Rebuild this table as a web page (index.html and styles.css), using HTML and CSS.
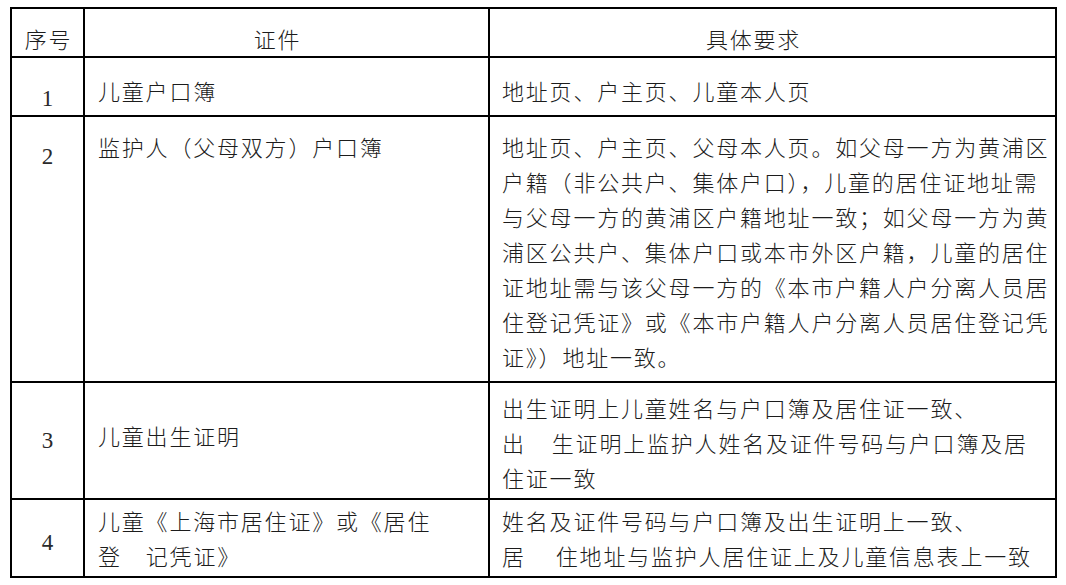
FILE: index.html
```html
<!DOCTYPE html>
<html lang="zh-CN">
<head>
<meta charset="utf-8">
<title>证件要求</title>
<link rel="stylesheet" href="styles.css">
</head>
<body>
<div class="sheet" role="table">
  <div class="cell head c1" role="columnheader">序号</div>
  <div class="cell head c2" role="columnheader">证件</div>
  <div class="cell head c3" role="columnheader">具体要求</div>

  <div class="cell num r1n" role="cell">1</div>
  <div class="cell txt r1t" role="cell">儿童户口簿</div>
  <div class="cell txt r1t req" role="cell">地址页、户主页、儿童本人页</div>

  <div class="cell num r2n" role="cell">2</div>
  <div class="cell txt r2t" role="cell">监护人（父母双方）户口簿</div>
  <div class="cell txt r2t req" role="cell">地址页、户主页、父母本人页。如父母一方为黄浦区<br>户籍（非公共户、集体户口），儿童的居住证地址需<br>与父母一方的黄浦区户籍地址一致；如父母一方为黄<br>浦区公共户、集体户口或本市外区户籍，儿童的居住<br>证地址需与该父母一方的《本市户籍人户分离人员居<br>住登记凭证》或《本市户籍人户分离人员居住登记凭<br>证》）地址一致。</div>

  <div class="cell num r3n" role="cell">3</div>
  <div class="cell txt r3t" role="cell">儿童出生证明</div>
  <div class="cell txt r3q req" role="cell">出生证明上儿童姓名与户口簿及居住证一致、<br>出<span class="sp sp-a"></span>生证明上监护人姓名及证件号码与户口簿及居<br>住证一致</div>

  <div class="cell num r4n" role="cell">4</div>
  <div class="cell txt r4t" role="cell">儿童《上海市居住证》或《居住<br>登<span class="sp sp-c"></span>记凭证》</div>
  <div class="cell txt r4t req" role="cell">姓名及证件号码与户口簿及出生证明上一致、<br>居<span class="sp sp-b"></span>住地址与监护人居住证上及儿童信息表上一致</div>
</div>
</body>
</html>
```

FILE: styles.css
```css
html, body {
  margin: 0;
  padding: 0;
  background: #ffffff;
}

body {
  color: #1c1c1c;
  font-family: "Noto Sans CJK SC", "Liberation Serif", serif;
}

.sheet {
  display: grid;
  grid-template-columns: 71px 403px 565px;
  grid-template-rows: 47px 57px 264px 115px 76px;
  gap: 2px;
  padding: 2px;
  background: #000000;
  width: 1043px;
  margin: 7px 0 0 10px;
}

.cell {
  background: #ffffff;
  box-sizing: border-box;
  font-size: 22px;
  line-height: 35px;
  letter-spacing: 1.8px;
  font-weight: 300;
  white-space: nowrap;
}

.head {
  padding-top: 12px;
  text-align: center;
}

.head.c1 { padding-left: 2px; }
.head.c2 { padding-right: 18px; }
.head.c3 { padding-right: 38px; }

.num {
  font-family: "Liberation Serif", "Times New Roman", serif;
  font-size: 23px;
  font-weight: 400;
  letter-spacing: 0;
  text-align: center;
  color: #2a2a2a;
}

.txt {
  padding-left: 13px;
}

.txt.req {
  padding-left: 12px;
}

.r1n { padding-top: 23px; }
.r1t { padding-top: 15px; }

.r2n { padding-top: 22px; }
.r2t { padding-top: 12px; }

.r3n { padding-top: 40px; }
.r3t { padding-top: 35px; }
.r3q { padding-top: 7px; }

.r4n { padding-top: 25px; }
.r4t { padding-top: 3px; }

.sp {
  display: inline-block;
}

.sp-a { width: 26px; }
.sp-b { width: 30px; }
.sp-c { width: 24px; }
```
